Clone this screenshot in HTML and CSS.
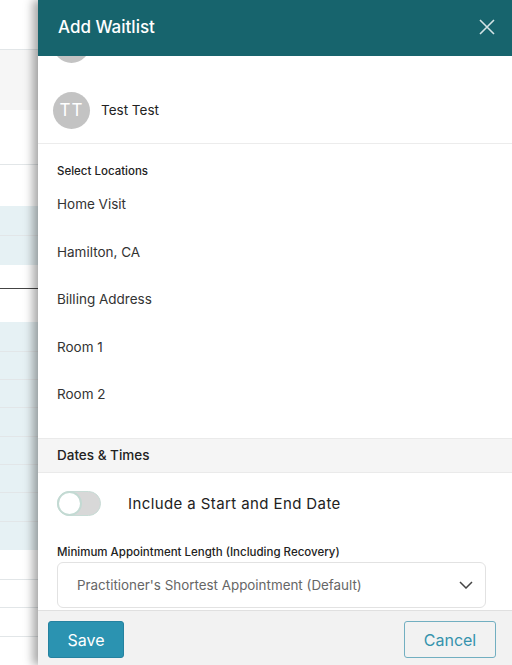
FILE: index.html
```html
<!DOCTYPE html>
<html lang="en">

<head>
    <meta charset="UTF-8">
    <meta name="viewport" content="width=device-width, initial-scale=1.0">
    <title>Add Waitlist</title>
    <link rel="stylesheet" href="styles.css">
</head>

<body>
    <div class="page">
        <div class="row r50 line"></div>
        <div class="row r60 grey"></div>
        <div class="row r55 line"></div>
        <div class="row r41"></div>
        <div class="row r30 blue line"></div>
        <div class="row r29 blue"></div>
        <div class="row r23"></div>
        <div class="row r34 dark"></div>
        <div class="row r30 blue line"></div>
        <div class="row r28 blue line"></div>
        <div class="row r28 blue line"></div>
        <div class="row r29 blue line"></div>
        <div class="row r28 blue line"></div>
        <div class="row r28 blue line"></div>
        <div class="row r29 blue line"></div>
        <div class="row r28 blue"></div>
        <div class="row r30 line"></div>
        <div class="row r28 line"></div>
        <div class="row r29 line"></div>
        <div class="row r28"></div>
    </div>

    <div class="panel">
        <div class="panel-head">
            <h2>Add Waitlist</h2>
            <svg class="close" width="16" height="16" viewBox="0 0 16 16">
                <path d="M1 1 L15 15 M15 1 L1 15" stroke="#d3e3e5" stroke-width="1.6" fill="none" />
            </svg>
        </div>

        <div class="panel-body">
            <div class="scroll">
                <div class="person">
                    <div class="avatar"></div>
                </div>
                <div class="person last">
                    <div class="avatar">TT</div>
                    <span>Test Test</span>
                </div>

                <div class="locations">
                    <div class="small-label">Select Locations</div>
                    <div class="loc">Home Visit</div>
                    <div class="loc">Hamilton, CA</div>
                    <div class="loc">Billing Address</div>
                    <div class="loc">Room 1</div>
                    <div class="loc">Room 2</div>
                </div>

                <div class="section-head">Dates &amp; Times</div>

                <div class="toggle-row">
                    <div class="toggle"><div class="knob"></div></div>
                    <span>Include a Start and End Date</span>
                </div>

                <div class="small-label min">Minimum Appointment Length (Including Recovery)</div>
                <div class="select">
                    <span>Practitioner's Shortest Appointment (Default)</span>
                    <svg width="14" height="8" viewBox="0 0 14 8">
                        <path d="M1 1 L7 7 L13 1" stroke="#444" stroke-width="1.5" fill="none" />
                    </svg>
                </div>
            </div>
        </div>

        <div class="panel-foot">
            <button class="btn save">Save</button>
            <button class="btn cancel">Cancel</button>
        </div>
    </div>
</body>

</html>
```

FILE: styles.css
```css
body {
    margin: 0;
    height: 665px;
    overflow: hidden;
    display: flex;
    font-family: Inter, "Liberation Sans", sans-serif;
    color: #222;
}

.page {
    width: 38px;
    flex-shrink: 0;
    display: flex;
    flex-direction: column;
}

.row {
    box-sizing: border-box;
    background: #fff;
}

.line {
    border-bottom: 1px solid #e2e6e8;
}

.grey {
    background: #f6f6f6;
    border-bottom: none;
}

.blue {
    background: #e6f1f4;
}

.dark {
    border-top: 1px solid #444;
}

.r23 { height: 23px; }
.r28 { height: 28px; }
.r29 { height: 29px; }
.r30 { height: 30px; }
.r34 { height: 34px; }
.r41 { height: 41px; }
.r50 { height: 50px; }
.r55 { height: 55px; }
.r60 { height: 60px; }

.panel {
    flex: 1;
    display: flex;
    flex-direction: column;
    background: #fff;
    box-shadow: -5px 0 9px rgba(0, 0, 0, 0.35);
    position: relative;
}

.panel-head {
    height: 56px;
    box-sizing: border-box;
    flex-shrink: 0;
    background: #17646d;
    display: flex;
    align-items: center;
    justify-content: space-between;
    padding: 0 17px 2px 20px;
}

.panel-head h2 {
    margin: 0;
    color: #fff;
    font-size: 17px;
    font-weight: 500;
}

.panel-body {
    flex: 1;
    overflow: hidden;
}

.scroll {
    margin-top: -45px;
}

.person {
    height: 66px;
    box-sizing: border-box;
    display: flex;
    align-items: center;
    gap: 11px;
    padding-left: 15px;
    font-size: 13.5px;
}

.person.last {
    border-bottom: 1px solid #ececec;
    height: 67px;
}

.avatar {
    width: 37px;
    height: 37px;
    border-radius: 50%;
    background: #c3c3c3;
    color: #fff;
    font-size: 17px;
    display: flex;
    align-items: center;
    justify-content: center;
    letter-spacing: 1px;
}

.locations {
    padding: 21px 0 19px 19px;
}

.small-label {
    font-size: 11.5px;
    font-weight: 500;
    line-height: 16px;
    color: #222;
}

.locations .small-label {
    margin-top: -2px;
    margin-bottom: 2px;
}

.loc {
    height: 47.5px;
    line-height: 47.5px;
    font-size: 13.5px;
    color: #333;
}

.loc:first-of-type {
    margin-top: 1px;
}

.section-head {
    height: 35px;
    box-sizing: border-box;
    background: #f5f5f5;
    border-top: 1px solid #eaeaea;
    border-bottom: 1px solid #eaeaea;
    padding-left: 19px;
    display: flex;
    align-items: center;
    font-size: 13.5px;
    font-weight: 500;
}

.toggle-row {
    display: flex;
    align-items: center;
    gap: 27px;
    padding: 18px 0 0 19px;
    font-size: 15px;
    letter-spacing: 0.4px;
}

.toggle {
    width: 44px;
    height: 25px;
    box-sizing: border-box;
    border-radius: 13px;
    background: #d8d8d8;
    border: 1px solid #c8dcd6;
    position: relative;
}

.knob {
    position: absolute;
    left: -1px;
    top: -1px;
    width: 25px;
    height: 25px;
    box-sizing: border-box;
    border-radius: 50%;
    background: #fff;
    border: 2px solid #c3dad3;
}

.small-label.min {
    margin: 28px 0 2px 19px;
}

.select {
    margin: 0 26px 0 19px;
    height: 46px;
    box-sizing: border-box;
    border: 1px solid #e2e2e2;
    border-radius: 6px;
    display: flex;
    align-items: center;
    justify-content: space-between;
    padding: 0 12px 0 19px;
    font-size: 13.4px;
    color: #666;
}

.panel-foot {
    height: 55px;
    flex-shrink: 0;
    box-sizing: border-box;
    background: #f2f2f2;
    border-top: 1px solid #e0e0e0;
    display: flex;
    justify-content: space-between;
    align-items: flex-start;
    padding: 10px 16px 0 10px;
}

.btn {
    height: 37px;
    border-radius: 3px;
    font-family: Inter, "Liberation Sans", sans-serif;
    font-size: 16px;
}

.save {
    width: 76px;
    background: #2b93b1;
    color: #fff;
    border: 1px solid #2582a0;
}

.cancel {
    width: 92px;
    background: transparent;
    color: #3593ad;
    border: 1px solid #72afc1;
}
```
